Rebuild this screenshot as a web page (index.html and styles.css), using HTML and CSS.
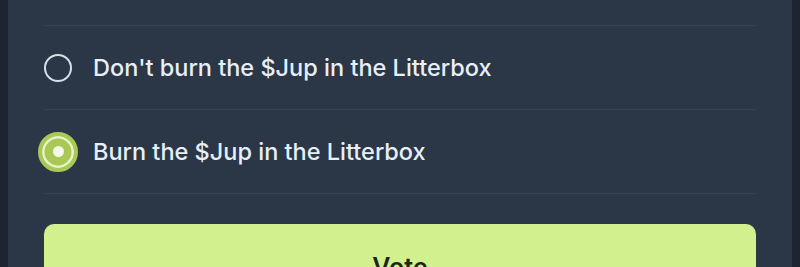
FILE: index.html
```html
<!DOCTYPE html>
<html lang="en">
<head>
<meta charset="utf-8">
<title>Vote</title>
<link rel="stylesheet" href="styles.css">
</head>
<body>
<div class="panel">
  <div class="options">
    <div class="option option-prev"></div>
    <label class="option">
      <span class="radio"></span>
      <span class="label">Don't burn the $Jup in the Litterbox</span>
    </label>
    <label class="option">
      <span class="radio radio-checked"><span class="dot"></span></span>
      <span class="label">Burn the $Jup in the Litterbox</span>
    </label>
  </div>
  <button class="vote">Vote</button>
</div>
</body>
</html>
```

FILE: styles.css
```css
* { box-sizing: border-box; }
html, body {
  margin: 0;
  padding: 0;
  height: 100%;
  overflow: hidden;
  background: #1d2630;
  font-family: Inter, "Noto Sans", "Liberation Sans", sans-serif;
}
.panel {
  margin: 0 8px;
  height: 100%;
  background: #2b3647;
  padding: 0 36px;
}
.options {
  display: flex;
  flex-direction: column;
}
.option {
  display: flex;
  align-items: center;
  gap: 21px;
  height: 84px;
  border-bottom: 1px solid #364152;
}
.option-prev {
  height: 26px;
}
.radio {
  flex: none;
  width: 28px;
  height: 28px;
  border-radius: 50%;
  border: 2px solid #d7dee7;
}
.radio-checked {
  width: 40px;
  height: 40px;
  margin: 0 -6px 0 -6px;
  border: 4px solid #a9c855;
  background: #a9c855;
  box-shadow: inset 0 0 0 2.5px #e8f3c8;
  display: flex;
  align-items: center;
  justify-content: center;
}
.dot {
  width: 11px;
  height: 11px;
  border-radius: 50%;
  background: #f4f8ea;
}
.label {
  color: #e6eff7;
  font-size: 23.5px;
  font-weight: 500;
  line-height: 1;
  padding-top: 1px;
}
.vote {
  display: block;
  width: 100%;
  margin-top: 30px;
  height: 86px;
  border: none;
  border-radius: 10px;
  background: #d3f08e;
  color: #1c2618;
  font-family: Inter, "Noto Sans", "Liberation Sans", sans-serif;
  font-size: 25px;
  font-weight: 600;
  padding-bottom: 2px;
}
```
